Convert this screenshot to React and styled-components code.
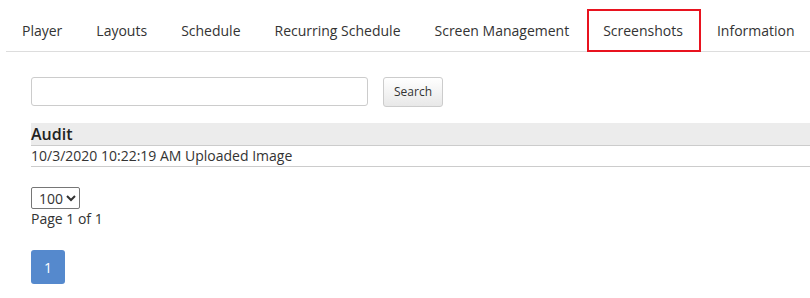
import styled, { createGlobalStyle } from "styled-components";

const GlobalStyle = createGlobalStyle`
    html, body{
        margin: 0;
        padding: 0;
        background: #fff;
    }
    body{
        font-family: "Open Sans", "Liberation Sans", sans-serif;
        font-size: 14px;
        color: #333;
        overflow: hidden;
    }
`

const Page = styled.div`
    width: 810px;
    height: 298px;
    overflow: hidden;
`

const Tabs = styled.ul`
    display: flex;
    list-style: none;
    margin: 0 0 0 6px;
    padding: 9px 0 0 0;
    border-bottom: 1px solid #ddd;
`

const Tab = styled.li`
    box-sizing: border-box;
    height: 43px;
    padding: 0 16px 1px 14px;
    margin-bottom: -1px;
    display: flex;
    align-items: center;
    font-size: 14px;
    color: #333;
    white-space: nowrap;
    border: 2px solid ${(p) => (p.$active ? "#e8131f" : "transparent")};
`

const Content = styled.div`
    padding: 24px 0 0 31px;
`

const SearchRow = styled.form`
    display: flex;
    align-items: center;
    gap: 15px;
`

const SearchInput = styled.input`
    box-sizing: border-box;
    width: 337px;
    height: 29px;
    border: 1px solid #ccc;
    border-radius: 3px;
    outline: none;
    padding: 4px 8px;
    font-family: inherit;
`

const SearchButton = styled.button`
    box-sizing: border-box;
    width: 60px;
    height: 30px;
    border: 1px solid #ccc;
    border-radius: 3px;
    background: linear-gradient(#fff, #e8e8e8);
    font-family: inherit;
    font-size: 12px;
    color: #333;
    padding: 0 0 2px 0;
    margin-top: 1px;
`

const Table = styled.table`
    width: 779px;
    border-collapse: collapse;
    margin-top: 16px;
    th{
        background: #ececec;
        text-align: left;
        font-size: 16px;
        font-weight: 600;
        color: #222;
        height: 22px;
        line-height: 22px;
        padding: 0;
        border-bottom: 1px solid #ccc;
    }
    td{
        padding: 0;
        height: 20px;
        line-height: 20px;
        font-size: 14px;
        border-bottom: 1px solid #ccc;
    }
`

const Pager = styled.div`
    margin-top: 20px;
    display: flex;
    flex-direction: column;
    align-items: flex-start;
`

const SizeSelect = styled.select`
    box-sizing: border-box;
    width: 49px;
    height: 22px;
    border: 1px solid #767676;
    border-radius: 2px;
    font-family: inherit;
    font-size: 14px;
    color: #333;
    background: #fff;
    padding: 0 0 0 3px;
`

const PageInfo = styled.div`
    font-size: 14px;
    line-height: 20px;
`

const PageButton = styled.button`
    box-sizing: border-box;
    margin-top: 21px;
    width: 34px;
    height: 34px;
    border: none;
    border-radius: 3px;
    background: #5589cd;
    color: #fff;
    font-family: inherit;
    font-size: 14px;
    padding: 0;
`

const tabs = ["Player", "Layouts", "Schedule", "Recurring Schedule", "Screen Management", "Screenshots", "Information"]

const App = () => {
  return (
    <Page>
    <GlobalStyle />
    <Tabs>
        {tabs.map((t) => (
        <Tab key={t} $active={t === "Screenshots"}>{t}</Tab>
        ))}
    </Tabs>
    <Content>
        <SearchRow onSubmit={(e) => e.preventDefault()}>
        <SearchInput type="text" />
        <SearchButton type="submit">Search</SearchButton>
        </SearchRow>
        <Table>
        <thead>
            <tr><th>Audit</th></tr>
        </thead>
        <tbody>
            <tr><td>10/3/2020 10:22:19 AM Uploaded Image</td></tr>
        </tbody>
        </Table>
        <Pager>
        <SizeSelect defaultValue="100">
            <option value="10">10</option>
            <option value="50">50</option>
            <option value="100">100</option>
        </SizeSelect>
        <PageInfo>Page 1 of 1</PageInfo>
        <PageButton>1</PageButton>
        </Pager>
    </Content>
  </Page>
  )
}

export default App
